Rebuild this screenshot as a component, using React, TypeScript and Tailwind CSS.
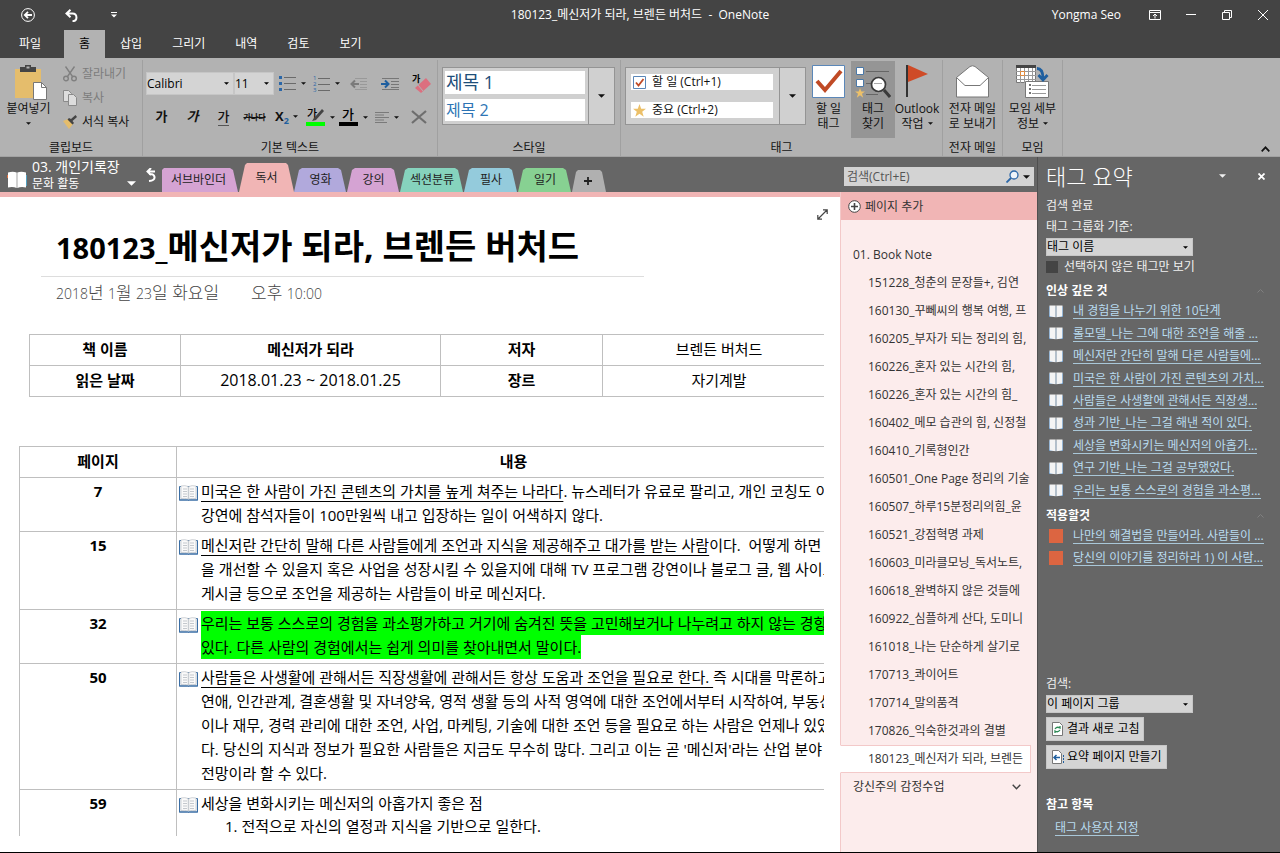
import React from "react"
import clsx from "clsx"

const sections = [
  { name: "서브바인더", style: "w-[77px] h-6 pr-1 bg-[#d5a3d3] [clip-path:polygon(0_100%,0_2px,2px_0,68px_0,71px_2px,76px_100%)]" },
  { name: "독서", style: "w-[55px] h-[29px] bg-[#f1b5b5] [clip-path:polygon(0_100%,6px_2px,8px_0,47px_0,49px_2px,100%_100%)]" },
  { name: "영화", style: "w-[53px] h-6 bg-[#b1a9dc] [clip-path:polygon(0_100%,5px_2px,8px_0,44px_0,47px_2px,52px_100%)]" },
  { name: "강의", style: "w-[53px] h-6 bg-[#d5a3d3] [clip-path:polygon(0_100%,5px_2px,8px_0,44px_0,47px_2px,52px_100%)]" },
  { name: "섹션분류", style: "w-16 h-6 bg-[#86d3bd] [clip-path:polygon(0_100%,5px_2px,8px_0,55px_0,58px_2px,63px_100%)]" },
  { name: "필사", style: "w-[54px] h-6 bg-[#94cbdc] [clip-path:polygon(0_100%,5px_2px,8px_0,45px_0,48px_2px,53px_100%)]" },
  { name: "일기", style: "w-[54px] h-6 bg-[#87d192] [clip-path:polygon(0_100%,5px_2px,8px_0,45px_0,48px_2px,53px_100%)]" },
]

const pages = [
  "151228_청춘의 문장들+, 김연",
  "160130_꾸뻬씨의 행복 여행, 프",
  "160205_부자가 되는 정리의 힘,",
  "160226_혼자 있는 시간의 힘,",
  "160226_혼자 있는 시간의 힘_",
  "160402_메모 습관의 힘, 신정철",
  "160410_기록형인간",
  "160501_One Page 정리의 기술",
  "160507_하루15분정리의힘_윤",
  "160521_강점혁명 과제",
  "160603_미라클모닝_독서노트,",
  "160618_완벽하지 않은 것들에",
  "160922_심플하게 산다, 도미니",
  "161018_나는 단순하게 살기로",
  "170713_콰이어트",
  "170714_말의품격",
  "170826_익숙한것과의 결별",
  "180123_메신저가 되라, 브렌든",
]

const impressive = [
  "내 경험을 나누기 위한 10단계",
  "롤모델_나는 그에 대한 조언을 해줄 ...",
  "메신저란 간단히 말해 다른 사람들에...",
  "미국은 한 사람이 가진 콘텐츠의 가치...",
  "사람들은 사생활에 관해서든 직장생...",
  "성과 기반_나는 그걸 해낸 적이 있다.",
  "세상을 변화시키는 메신저의 아홉가...",
  "연구 기반_나는 그걸 공부했었다.",
  "우리는 보통 스스로의 경험을 과소평...",
]

const toApply = ["나만의 해결법을 만들어라. 사람들이 ...", "당신의 이야기를 정리하라 1) 이 사람..."]

const Caret = ({ className = "h-[3px] w-[5px]" }: { className?: string }) => (
  <svg viewBox="0 0 8 4" className={clsx("shrink-0", className)} fill="currentColor" aria-hidden>
    <path d="M0 0h8L4 4z" />
  </svg>
)

const Book = ({ className = "" }: { className?: string }) => (
  <svg viewBox="0 0 19 16" className={clsx("shrink-0", className)} aria-hidden>
    <path d="M.5 1.500h18v13.500h-8l-1 .5-1-.5h-8z" fill="#e9eef4" stroke="#3a6ea5" />
    <path d="M2 1Q6 0 9.200 1.500v12.500Q6 13 2 13.500zM17 1q-4-1-7.200.5v12.500q3.200-1 7.200-.5z" fill="#fafafa" stroke="#b4b9c0" strokeWidth=".6" />
    <path d="M4 4h4M4 6.500h4M4 9h4M4 11.500h4M11 4h4M11 6.500h4M11 9h4M11 11.500h4" stroke="#c4c8cd" />
    <path d="M0 15h19" stroke="#3a6ea5" />
  </svg>
)

const WhiteBook = ({ className = "" }: { className?: string }) => (
  <svg viewBox="0 0 14 13" className={clsx("shrink-0", className)} aria-hidden>
    <path d="M0 1.500h14V12H0z" fill="#3b78b5" />
    <path d="M.5.5h6.200v11.800L.5 11.500zM13.500.5H7.300v11.800l6.200-.8z" fill="#f4f4f4" />
    <path d="M7 1v11" stroke="#a5a5a5" strokeWidth=".7" />
  </svg>
)

const Group = ({ label, className, children }: { label: string; className: string; children: React.ReactNode }) => (
  <section className={clsx("flex shrink-0 flex-col border-r border-[#a0a0a0]", className)}>
    <div className="flex h-[79px]">{children}</div>
    <h2 className="pt-0.5 text-center leading-4">{label}</h2>
  </section>
)

const Dropdown = ({ id, value, className }: { id: string; value: string; className: string }) => (
  <div className={clsx("relative text-black", className)}>
    <select id={id} aria-label={value} className="h-full w-full appearance-none border border-[#c6c6c6] bg-[#d4d4d4] leading-4 outline-none">
      <option>{value}</option>
    </select>
    <span className="pointer-events-none absolute inset-y-px right-px flex w-3.5 items-center justify-center">
      <Caret />
    </span>
  </div>
)

const TitleBar = () => (
  <header className="bg-[#444] text-white">
    <div className="grid h-[30px] grid-cols-[1fr_auto_1fr] items-center">
      <div className="flex items-center pl-[21px]">
        <button aria-label="뒤로">
          <svg viewBox="0 0 14 14" className="size-3.5" fill="none" stroke="white">
            <circle cx="7" cy="7" r="6.400" strokeWidth="1" />
            <path d="M11 7H4M7 3.800L3.800 7 7 10.200" strokeWidth="1.800" />
          </svg>
        </button>
        <button aria-label="실행 취소" className="ml-[30px]">
          <svg viewBox="0 0 13 13" className="size-[13px]" fill="none" stroke="white" strokeWidth="2">
            <path d="M5.500.8L1.500 4.500l4 3.700M2 4.500h5.500c5 0 5.500 7.500 0 7.700" />
          </svg>
        </button>
        <button aria-label="빠른 실행 도구 모음" className="ml-[33px]">
          <svg viewBox="0 0 6 6" className="size-1.5" fill="white">
            <path d="M0 0h6v1H0zM0 2.500h6L3 5.500z" />
          </svg>
        </button>
      </div>
      <h1>180123_메신저가 되라, 브렌든 버처드 &nbsp;-&nbsp; OneNote</h1>
      <div className="flex h-7 items-center justify-end pr-3">
        <span>Yongma Seo</span>
        <button aria-label="리본 표시 옵션" className="ml-7">
          <svg viewBox="0 0 12 10" className="h-2.5 w-3" fill="none" stroke="white">
            <path d="M.5.5h11v9H.5zM.5 2.500h11M6 8.500V4.500M4 6l2-2 2 2" />
          </svg>
        </button>
        <button aria-label="최소화" className="ml-[25px]">
          <svg viewBox="0 0 10 10" className="size-2.5" stroke="white">
            <path d="M0 4.500h10" />
          </svg>
        </button>
        <button aria-label="이전 크기로" className="ml-[26px]">
          <svg viewBox="0 0 10 10" className="size-2.5" fill="none" stroke="white">
            <path d="M.5 2.500h7v7h-7zM2.500 2.500v-2h7v7h-2" />
          </svg>
        </button>
        <button aria-label="닫기" className="ml-[26px]">
          <svg viewBox="0 0 10 10" className="size-2.5" stroke="white">
            <path d="M0 0l10 10M10 0L0 10" />
          </svg>
        </button>
      </div>
    </div>
    <nav className="flex h-7 leading-7">
      <button className="w-16 pr-1">파일</button>
      <button className="bg-[#b2b2b2] px-[15px] text-black">홈</button>
      {["삽입", "그리기", "내역", "검토", "보기"].map((item) => (
        <button key={item} className="px-[15px]">
          {item}
        </button>
      ))}
    </nav>
  </header>
)

const Clipboard = () => (
  <Group label="클립보드" className="w-[143px]">
    <button className="flex w-[57px] flex-col items-center pt-[5px]">
      <svg viewBox="0 0 34 36" className="ml-1 h-9 w-[34px] shrink-0">
        <path d="M1 4h26v29H1z" fill="#e5bd6c" />
        <path d="M6 7V2h5V0h6v2h5v5z" fill="#444" />
        <path d="M12.500 1.500h3v2h-3z" fill="#b2b2b2" />
        <path d="M19.500 17.500h8l5 5v12h-13z" fill="#fff" stroke="#777" />
        <path d="M27.500 17.500v5h5" fill="none" stroke="#777" />
      </svg>
      <span className="leading-4">붙여넣기</span>
      <Caret className="mt-[5px] h-[3px] w-[5px]" />
    </button>
    <div className="flex flex-col pt-0.5 pl-1.5 leading-6">
      <button className="flex items-center gap-[5px] text-[#7c7c7c]" disabled>
        <svg viewBox="0 0 14 16" className="h-4 w-3.5" fill="none" stroke="#808080" strokeWidth="1.400">
          <path d="M2.500.5l7 10M11.500.5l-7 10" />
          <circle cx="3" cy="12.500" r="2.300" />
          <circle cx="11" cy="12.500" r="2.300" />
        </svg>
        잘라내기
      </button>
      <button className="flex items-center gap-[5px] text-[#7c7c7c]" disabled>
        <svg viewBox="0 0 14 16" className="h-4 w-3.5" fill="#ddd" stroke="#8a8a8a">
          <path d="M.5.500h5l3 3v8h-8z" />
          <path d="M5.500 4.500h5l3 3v8h-8z" />
        </svg>
        복사
      </button>
      <button className="flex items-center gap-[5px]">
        <svg viewBox="0 0 14 14" className="size-3.5">
          <path d="M0 6l5-2 5 5-4 5z" fill="#e5bd6c" />
          <path d="M4.500 4.500l5 5 1.500-1.500-1.500-2L14 2l-1.500-2L8 4 6 3z" fill="#444" />
        </svg>
        서식 복사
      </button>
    </div>
  </Group>
)

const BasicText = () => (
  <Group label="기본 텍스트" className="w-[295px]">
    <div className="flex flex-col pl-[3px]">
      <div className="mt-3 flex h-[23px] items-center">
        <Dropdown id="font" value="Calibri" className="h-[23px] w-[88px]" />
        <Dropdown id="size" value="11" className="h-[23px] w-10" />
        <button aria-label="글머리 기호" className="flex w-9 items-center justify-center gap-[5px]">
          <svg viewBox="0 0 17 17" className="size-[17px]">
            <path d="M0 1h3v3H0zM0 7h3v3H0zM0 13h3v3H0z" fill="#2b67a8" />
            <path d="M5 2.500h12M5 8.500h12M5 14.500h12" stroke="#6a6a6a" />
          </svg>
          <Caret />
        </button>
        <button aria-label="번호 매기기" className="flex w-[33px] items-center justify-center gap-[5px]">
          <svg viewBox="0 0 17 17" className="size-[17px] overflow-visible">
            <text x="0" y="5" fontSize="6" fill="#2b67a8">1</text>
            <text x="0" y="11" fontSize="6" fill="#2b67a8">2</text>
            <text x="0" y="17" fontSize="6" fill="#2b67a8">3</text>
            <path d="M5 3.500h12M5 9.500h12M5 15.500h12" stroke="#6a6a6a" />
          </svg>
          <Caret />
        </button>
        <button aria-label="내어쓰기" className="flex w-[31px] justify-center" disabled>
          <svg viewBox="0 0 18 12" className="h-3 w-[18px]" fill="none">
            <path d="M5 .5h12M10 3.500h7M10 6.500h7M10 9.500h7M5 11.500h12" stroke="#999" />
            <path d="M9 6H1.500M5 2.500L1.500 6 5 9.500" stroke="#7a7a7a" strokeWidth="2" />
          </svg>
        </button>
        <button aria-label="들여쓰기" className="flex w-[31px] justify-center">
          <svg viewBox="0 0 18 12" className="h-3 w-[18px]" fill="none">
            <path d="M1 .5h17M10 3.500h8M10 6.500h8M10 9.500h8M1 11.500h17" stroke="#777" />
            <path d="M0 6h7.500M4 2.500L7.500 6 4 9.500" stroke="#1f5f9f" strokeWidth="2" />
          </svg>
        </button>
        <button aria-label="서식 지우기" className="flex w-8 justify-center">
          <svg viewBox="0 0 19 19" className="size-[19px] overflow-visible">
            <text x="0" y="8" fontSize="9" fontWeight="bold">가</text>
            <path d="M3 14L14 4l5 6-10 9z" fill="#dc6f7f" />
            <path d="M6 11l5 6" stroke="#b2b2b2" />
          </svg>
        </button>
      </div>
      <div className="mt-2.5 flex h-6 items-center text-[13px] font-bold">
        <button className="w-[31px]">가</button>
        <button className="w-[31px] italic">가</button>
        <button className="w-[31px] font-medium">
          <span className="border-b border-[#555]">가</span>
        </button>
        <button className="w-[31px] text-[8px] line-through">가나다</button>
        <button aria-label="아래 첨자" className="flex w-[33px] items-center justify-center gap-1">
          <span>
            X<sub className="text-[9px] text-[#1f5f9f]">2</sub>
          </span>
          <Caret />
        </button>
        <button aria-label="강조 색" className="flex w-[34px] items-center justify-center gap-[5px] font-medium">
          <svg viewBox="0 0 19 19" className="size-[19px] overflow-visible">
            <text x="1" y="10" fontSize="11">가</text>
            <path d="M8 10l8-9 2 2-8 9-4 1z" fill="#444" />
            <path d="M0 14h19v4H0z" fill="#0f0" />
          </svg>
          <Caret />
        </button>
        <button aria-label="글꼴 색" className="flex w-[33px] items-center justify-center gap-[5px] font-medium">
          <svg viewBox="0 0 19 19" className="size-[19px] overflow-visible">
            <text x="3" y="11" fontSize="13">가</text>
            <path d="M0 14h19v4H0z" fill="#000" />
          </svg>
          <Caret />
        </button>
        <button aria-label="맞춤" className="flex w-[34px] items-center justify-center gap-[5px]">
          <svg viewBox="0 0 14 11" className="h-[11px] w-3.5" stroke="#7a7a7a">
            <path d="M0 .5h14M0 3h9M0 5.500h14M0 8h9M0 10.500h12" />
          </svg>
          <Caret />
        </button>
        <button aria-label="삭제" className="flex w-[30px] justify-center">
          <svg viewBox="0 0 16 14" className="h-3.5 w-4" stroke="#6e6e6e" strokeWidth="2.200">
            <path d="M1 1l14 12M15 1L1 13" />
          </svg>
        </button>
      </div>
    </div>
  </Group>
)

const bigButton = "flex flex-col items-center pt-[5px] leading-[15px] whitespace-nowrap"

const Ribbon = () => (
  <div className="flex h-[99px] border-b border-[#a2a2a2] bg-[#b2b2b2] pt-0.5">
    <Clipboard />
    <BasicText />
    <Group label="스타일" className="w-[183px]">
      <div className="mt-[7px] ml-1 flex h-[58px] w-[173px] border border-[#949494] bg-[#d0d0d0]">
        <div className="flex flex-1 flex-col gap-[5px] p-[3px] pl-0.5">
          <button className="bg-white pl-px text-left text-lg leading-[23px] text-[#1e4e79]">제목 1</button>
          <button className="bg-white pl-px text-left text-base leading-[22px] text-[#2e75b5]">제목 2</button>
        </div>
        <button aria-label="스타일 더 보기" className="flex w-[26px] items-center justify-center border-l border-[#949494]">
          <Caret className="h-1 w-[7px]" />
        </button>
      </div>
    </Group>
    <Group label="태그" className="w-[322px]">
      <div className="mt-[7px] ml-1 flex h-[58px] w-[181px] border border-[#949494] bg-[#d0d0d0]">
        <div className="flex flex-1 flex-col justify-between py-1.5 pr-1.5 pl-[5px] leading-4">
          <button className="flex items-center gap-1.5 bg-white pl-0.5">
            <svg viewBox="0 0 13 13" className="size-[13px]" fill="#fff">
              <path d="M.5.500h12v12H.5z" stroke="#5b87b8" />
              <path d="M3 6.500l2.500 3L10.500 3" fill="none" stroke="#c04a25" strokeWidth="1.800" />
            </svg>
            할 일 (Ctrl+1)
          </button>
          <button className="flex items-center gap-1.5 bg-white pl-0.5">
            <svg viewBox="0 0 13 13" className="size-[13px]" fill="#ecc069">
              <path d="M6.500 0l1.700 4.700H13L9.200 7.700l1.500 5.100-4.200-3-4.200 3 1.500-5.100L0 4.700h4.800z" />
            </svg>
            중요 (Ctrl+2)
          </button>
        </div>
        <button aria-label="태그 더 보기" className="flex w-[26px] items-center justify-center border-l border-[#949494]">
          <Caret className="h-1 w-[7px]" />
        </button>
      </div>
      <button className={clsx(bigButton, "w-[45px]")}>
        <svg viewBox="0 0 33 33" className="mb-[3px] size-[33px] shrink-0">
          <path d="M.5.500h32v32H.5z" fill="#fff" stroke="#5b87b8" />
          <path d="M5 16l8 9L29 6" fill="none" stroke="#c04a25" strokeWidth="4" />
        </svg>
        할 일<br />
        태그
      </button>
      <button className={clsx(bigButton, "mt-px h-[77px] w-11 bg-[#959595]")}>
        <svg viewBox="0 0 36 32" className="mb-[3px] h-8 w-9 shrink-0">
          <path d="M1.500 1.500h7v7h-7zM1.500 13.500h7v7h-7z" fill="#fff" stroke="#4b79a8" />
          <path d="M11 5.500h23M11 17.500h8M11 28.500h12" stroke="#666" />
          <path d="M5 22l1.300 3.500H10l-3 2.300 1.200 3.900L5 29.300l-3.200 2.400L3 27.800l-3-2.300h3.700z" fill="#ecc069" />
          <path d="M29 24l6 7" stroke="#3a3a3a" strokeWidth="3" />
          <circle cx="23.500" cy="18.500" r="7" fill="#fff" stroke="#3a3a3a" strokeWidth="1.700" />
          <path d="M19 17.500h8" stroke="#aaa" />
        </svg>
        태그
        <br />
        찾기
      </button>
      <button className={clsx(bigButton, "w-11")}>
        <svg viewBox="0 0 22 33" className="mb-[3px] h-[33px] w-[22px] shrink-0">
          <path d="M0 0h2v32H0z" fill="#333" />
          <path d="M2 0l20 9L2 17z" fill="#cf4b27" />
        </svg>
        Outlook
        <span className="flex items-center gap-1">
          작업 <Caret />
        </span>
      </button>
    </Group>
    <Group label="전자 메일" className="w-[60px]">
      <button className={clsx(bigButton, "flex-1")}>
        <svg viewBox="0 0 33 33" className="mb-[3px] size-[33px] shrink-0" fill="#fff" stroke="#777">
          <path d="M.5 12.500L14 1.500q2.500-1.500 5 0L32.500 12.500v19.500H.5z" />
          <path d="M.5 12.500l8.500 8h15l8.500-8" fill="none" />
        </svg>
        전자 메일
        <br />로 보내기
      </button>
    </Group>
    <Group label="모임" className="w-[60px]">
      <button className={clsx(bigButton, "flex-1")}>
        <svg viewBox="0 0 33 33" className="mb-[3px] size-[33px] shrink-0">
          <path d="M.5.500h19v17H.5z" fill="#fff" stroke="#777" />
          <path d="M0 0h20v3H0z" fill="#444" />
          <path d="M4.500 3v15M8.500 3v15M12.500 3v15M16.500 3v15M0 6.500h20M0 10.500h20M0 14.500h20" stroke="#999" />
          <path d="M4.500 6.500h4v4h-4z" fill="#fff" stroke="#e08a3c" />
          <path d="M9.500 16.500h23v16h-23z" fill="#fff" stroke="#777" />
          <path d="M13 20h2M13 24h2M13 28h2" stroke="#444" strokeWidth="1.500" />
          <path d="M16 20.500h14M16 24.500h14M16 28.500h14" stroke="#999" />
          <path d="M21 3.500q6 0 6 10M22.500 10l4.500 5 4.500-5" fill="none" stroke="#1f5f9f" strokeWidth="2.800" />
        </svg>
        모임 세부
        <span className="flex items-center gap-1">
          정보 <Caret />
        </span>
      </button>
    </Group>
    <button aria-label="리본 축소" className="mr-2.5 mb-1 ml-auto self-end">
      <svg viewBox="0 0 9 6" className="h-1.5 w-[9px]" fill="none" stroke="#111" strokeWidth="1.700">
        <path d="M.7 5.300l3.800-4 3.800 4" />
      </svg>
    </button>
  </div>
)

const SectionBar = () => (
  <div className="flex h-[35px] items-end bg-[#666]">
    <button className="flex h-full items-end pl-[7px] text-left text-white">
      <svg viewBox="0 0 20 17" className="mb-1 h-[17px] w-5">
        <path d="M0 4h2v3H0z" fill="#e07040" />
        <path d="M1 1.500Q6 0 9.700 1.500V17Q6 15.500 1 16.500zM19 1.500Q14 0 10.300 1.500V17q3.700-1.500 8.700-.5z" fill="#fff" />
        <path d="M19.500 4v11" stroke="#52a0c0" />
      </svg>
      <span className="ml-[5px] flex w-[95px] flex-col">
        <span className="text-sm leading-[18px]">03. 개인기록장</span>
        <span className="leading-4">문화 활동</span>
      </span>
      <Caret className="mb-1.5 h-[5px] w-[9px]" />
    </button>
    <button aria-label="돌아가기" className="mb-2.5 ml-1 w-[22px]">
      <svg viewBox="0 0 10 14" className="mx-auto h-3.5 w-2.5" fill="none" stroke="#fff" strokeWidth="2">
        <path d="M5 0L1.500 3.500 5 7M2 3.500h7M3 6q5-.5 5.500 3T3 13" />
      </svg>
    </button>
    <nav className="flex items-end text-[#222]">
      {sections.map(({ name, style }) => (
        <button key={name} className={style}>
          {name}
        </button>
      ))}
      <button aria-label="새 섹션" className="flex h-[22px] w-[34px] items-center justify-center bg-[#b0b0b0] [clip-path:polygon(0_100%,4px_2px,6px_0,28px_0,30px_2px,100%_100%)]">
        <svg viewBox="0 0 8 8" className="mr-0.5 size-2" stroke="#222" strokeWidth="1.800">
          <path d="M4 0v8M0 4h8" />
        </svg>
      </button>
    </nav>
    <div className="mr-[3px] mb-1.5 ml-auto flex h-[19px] w-[190px] items-center bg-[#d3d3d3]">
      <input aria-label="검색" placeholder="검색(Ctrl+E)" className="min-w-0 flex-1 pl-[3px] outline-none placeholder:text-[#555]" />
      <svg viewBox="0 0 13 13" className="size-[13px]" fill="none" stroke="#2b67a8">
        <circle cx="8" cy="5" r="4" fill="#eef4fa" strokeWidth="1.300" />
        <path d="M5 8l-4.500 4.500" strokeWidth="1.800" />
      </svg>
      <Caret className="mx-1 h-1 w-[7px]" />
    </div>
  </div>
)

const Row = ({ page, children }: { page: string; children: React.ReactNode }) => (
  <tr>
    <th className="border border-[#bfbfbf] pt-px pb-1 align-top">{page}</th>
    <td className="border border-[#bfbfbf] pt-px pb-1 pl-0.5 align-top">
      <div className="flex">
        <Book className="mt-1.5 mr-[3px] h-4 w-[19px]" />
        <div>{children}</div>
      </div>
    </td>
  </tr>
)

const underlined = "underline decoration-1 underline-offset-4"

const Note = () => (
  <main className="relative flex min-w-0 flex-1 flex-col border-t-[5px] border-[#f1b5b5] bg-white pr-4 pb-4 text-black">
    <button aria-label="전체 페이지 보기" className="absolute top-3 right-3">
      <svg viewBox="0 0 11 11" className="size-[11px]" fill="none" stroke="#444">
        <path d="M1 10L10 1M6 .8h4.200V5M.8 6v4.200H5" strokeWidth="1.200" />
      </svg>
    </button>
    <div className="min-h-0 flex-1 overflow-hidden">
      <h2 className="ml-[41px] w-[603px] border-b border-[#ddd] pt-[25px] pb-1 pl-[15px] text-[34px] leading-[48px] font-bold whitespace-nowrap">
        <span className="text-[29px]">180123_</span>메신저가 되라, 브렌든 버처드
      </h2>
      <p className="flex gap-8 pt-[5px] pl-14 text-[17px] leading-[22px] font-light text-[#444]">
        <span>
          <span className="text-sm">2018</span>년 <span className="text-sm">1</span>월 <span className="text-sm">23</span>일 화요일
        </span>
        <span>
          오후 <span className="text-sm">10:00</span>
        </span>
      </p>
      <table className="mt-[30px] ml-[29px] w-[807px] table-fixed border-collapse text-center text-[15px] leading-6 whitespace-nowrap">
        <colgroup>
          <col className="w-[151px]" />
          <col className="w-[260px]" />
          <col className="w-[162px]" />
          <col />
        </colgroup>
        <tbody>
          <tr>
            <th className="border border-[#bfbfbf] pt-0.5 pb-1">책 이름</th>
            <td className="border border-[#bfbfbf] pt-0.5 pb-1 font-bold">메신저가 되라</td>
            <th className="border border-[#bfbfbf] pt-0.5 pb-1">저자</th>
            <td className="border border-[#bfbfbf] pt-0.5 pb-1">브렌든 버처드</td>
          </tr>
          <tr>
            <th className="border border-[#bfbfbf] pt-0.5 pb-1">읽은 날짜</th>
            <td className="border border-[#bfbfbf] pt-0.5 pb-1 text-base leading-6">2018.01.23 ~ 2018.01.25</td>
            <th className="border border-[#bfbfbf] pt-0.5 pb-1">장르</th>
            <td className="border border-[#bfbfbf] pt-0.5 pb-1">자기계발</td>
          </tr>
        </tbody>
      </table>
      <table className="mt-[49px] ml-[19px] w-[832px] table-fixed border-collapse text-[15px] leading-6 whitespace-nowrap">
        <colgroup>
          <col className="w-[157px]" />
          <col />
        </colgroup>
        <thead>
          <tr>
            <th className="border border-[#bfbfbf] pt-0.5 pb-1">페이지</th>
            <th className="border border-[#bfbfbf] pt-0.5 pb-1">내용</th>
          </tr>
        </thead>
        <tbody>
          <Row page="7">
            <span className={underlined}>미국은 한 사람이 가진 콘텐츠의 가치를 높게 쳐주는 나라다</span>. 뉴스레터가 유료로 팔리고, 개인 코칭도 이
            <br />
            강연에 참석자들이 100만원씩 내고 입장하는 일이 어색하지 않다.
          </Row>
          <Row page="15">
            <span className={underlined}>메신저란 간단히 말해 다른 사람들에게 조언과 지식을 제공해주고 대가를 받는 사람</span>이다. &nbsp;어떻게 하면
            <br />
            을 개선할 수 있을지 혹은 사업을 성장시킬 수 있을지에 대해 TV 프로그램 강연이나 블로그 글, 웹 사이트
            <br />
            게시글 등으로 조언을 제공하는 사람들이 바로 메신저다.
          </Row>
          <Row page="32">
            <span className="block bg-[#0f0]">우리는 보통 스스로의 경험을 과소평가하고 거기에 숨겨진 뜻을 고민해보거나 나누려고 하지 않는 경향이</span>
            <span className="block w-fit bg-[#0f0]">있다. 다른 사람의 경험에서는 쉽게 의미를 찾아내면서 말이다.</span>
          </Row>
          <Row page="50">
            <span className={underlined}>사람들은 사생활에 관해서든 직장생활에 관해서든 항상 도움과 조언을 필요로 한다. </span>즉 시대를 막론하고
            <br />
            연애, 인간관계, 결혼생활 및 자녀양육, 영적 생활 등의 사적 영역에 대한 조언에서부터 시작하여, 부동산
            <br />
            이나 재무, 경력 관리에 대한 조언, 사업, 마케팅, 기술에 대한 조언 등을 필요로 하는 사람은 언제나 있었
            <br />
            다. 당신의 지식과 정보가 필요한 사람들은 지금도 무수히 많다. 그리고 이는 곧 '메신저'라는 산업 분야
            <br />
            전망이라 할 수 있다.
          </Row>
          <Row page="59">
            세상을 변화시키는 메신저의 아홉가지 좋은 점
            <ol className="list-inside list-decimal pl-6 leading-[22px]">
              <li>전적으로 자신의 열정과 지식을 기반으로 일한다.</li>
            </ol>
          </Row>
        </tbody>
      </table>
    </div>
  </main>
)

const PageList = () => (
  <nav className="flex w-[197px] shrink-0 flex-col border-l border-[#f3c9c9] bg-[#fcecec] leading-7 text-[#333]">
    <button className="flex h-7 items-center gap-1 bg-[#f1b5b5] pt-px pl-[7px]">
      <svg viewBox="0 0 13 13" className="size-[13px]" fill="#fff" stroke="#444">
        <circle cx="6.500" cy="6.500" r="5.800" />
        <path d="M6.500 3v7M3 6.500h7" strokeWidth="1.600" />
      </svg>
      페이지 추가
    </button>
    <a href="#book-note" className="mt-[21px] pl-3">
      01. Book Note
    </a>
    <ul>
      {pages.map((page, i) => (
        <li key={i} className={clsx("mr-1.5 h-7 pl-[27px]", i === pages.length - 1 && "-ml-px border border-[#f3c9c9] border-l-white bg-white leading-[26px]")}>
          <a href="#page" className="block overflow-hidden whitespace-nowrap">
            {page}
          </a>
        </li>
      ))}
    </ul>
    <button className="flex items-center justify-between pr-4 pl-3">
      강신주의 감정수업
      <svg viewBox="0 0 9 6" className="h-1.5 w-[9px]" fill="none" stroke="#444" strokeWidth="1.400">
        <path d="M.7.700l3.800 4 3.800-4" />
      </svg>
    </button>
  </nav>
)

const GroupHeading = ({ children }: { children: string }) => (
  <h3 className="flex items-center justify-between pr-4 leading-[19px] font-bold text-white">
    {children}
    <svg viewBox="0 0 7 4" className="h-1 w-[7px]" fill="none" stroke="#808080">
      <path d="M.5 3.500l3-3 3 3" />
    </svg>
  </h3>
)

const link = "truncate border-b border-[#a9c7d8] leading-[15px]"

const TagSummary = () => (
  <aside className="flex w-[243px] shrink-0 flex-col border-l border-[#4f4f4f] bg-[#666] pl-2 text-[#f0f0f0]">
    <div className="flex h-[38px] items-center pr-[15px]">
      <h2 className="text-[22px] leading-8 font-light text-white">태그 요약</h2>
      <button aria-label="작업창 옵션" className="mr-8 ml-auto">
        <Caret className="h-1 w-[7px]" />
      </button>
      <button aria-label="닫기">
        <svg viewBox="0 0 7 7" className="size-[7px]" stroke="#fff" strokeWidth="1.800">
          <path d="M.5.500l6 6M6.500.500l-6 6" />
        </svg>
      </button>
    </div>
    <p className="pt-px leading-5">검색 완료</p>
    <label htmlFor="group-by" className="leading-[22px]">
      태그 그룹화 기준:
    </label>
    <Dropdown id="group-by" value="태그 이름" className="h-[18px] w-[147px]" />
    <label className="mt-px flex items-center gap-1.5 leading-5">
      <input type="checkbox" className="size-3 appearance-none bg-[#444]" />
      선택하지 않은 태그만 보기
    </label>
    <div className="mt-1">
      <GroupHeading>인상 깊은 것</GroupHeading>
      <ul className="grid h-[202px] text-[#b9dcf0]">
        {impressive.map((text) => (
          <li key={text} className="flex items-center pr-3 pl-[3px]">
            <WhiteBook className="mr-2.5 h-[13px] w-3.5" />
            <a href="#tag" className={link}>
              {text}
            </a>
          </li>
        ))}
      </ul>
    </div>
    <div className="mt-1">
      <GroupHeading>적용할것</GroupHeading>
      <ul className="grid h-11 text-[#b9dcf0]">
        {toApply.map((text) => (
          <li key={text} className="flex items-center pr-3 pl-[3px]">
            <span className="mr-2.5 size-3.5 shrink-0 bg-[#dc6541]" />
            <a href="#tag" className={link}>
              {text}
            </a>
          </li>
        ))}
      </ul>
    </div>
    <div className="mt-auto flex flex-col items-start">
      <label htmlFor="scope" className="leading-[22px]">
        검색:
      </label>
      <Dropdown id="scope" value="이 페이지 그룹" className="h-[18px] w-[147px]" />
      <button className="mt-1 flex h-6 items-center gap-0.5 border border-[#c6c6c6] bg-[#d4d4d4] px-1 text-black">
        <svg viewBox="0 0 14 14" className="size-3.5" fill="none">
          <path d="M1.500.500h7l3 3v10h-10z" fill="#fff" stroke="#777" />
          <path d="M4 7q2-3 5-1V4M9 8q-2 3-5 1v2" stroke="#2e8b57" strokeWidth="1.300" />
        </svg>
        결과 새로 고침
      </button>
      <button className="mt-1 flex h-6 items-center gap-0.5 border border-[#c6c6c6] bg-[#d4d4d4] px-1 text-black">
        <svg viewBox="0 0 14 14" className="size-3.5" fill="none">
          <path d="M1.500.500h6l3 3v10h-9z" fill="#fff" stroke="#777" />
          <path d="M9 7.500H3M5.500 5L3 7.500 5.500 10" stroke="#1f5f9f" strokeWidth="1.500" />
          <path d="M12.500 5v9" stroke="#1f5f9f" strokeDasharray="2 1" />
        </svg>
        요약 페이지 만들기
      </button>
      <h3 className="mt-[26px] leading-5 font-bold text-white">참고 항목</h3>
      <a href="#customize" className={clsx(link, "mt-[5px] mb-4 ml-[9px] text-[#b9dcf0]")}>
        태그 사용자 지정
      </a>
    </div>
  </aside>
)

export default function App() {
  return (
    <div className="flex h-screen flex-col overflow-hidden border-b border-black bg-white text-xs text-[#111] [font-family:'Open_Sans','Noto_Sans_CJK_KR',sans-serif]">
      <TitleBar />
      <Ribbon />
      <div className="flex min-h-0 flex-1">
        <div className="flex min-w-0 flex-1 flex-col">
          <SectionBar />
          <div className="flex min-h-0 flex-1">
            <Note />
            <PageList />
          </div>
        </div>
        <TagSummary />
      </div>
    </div>
  )
}
